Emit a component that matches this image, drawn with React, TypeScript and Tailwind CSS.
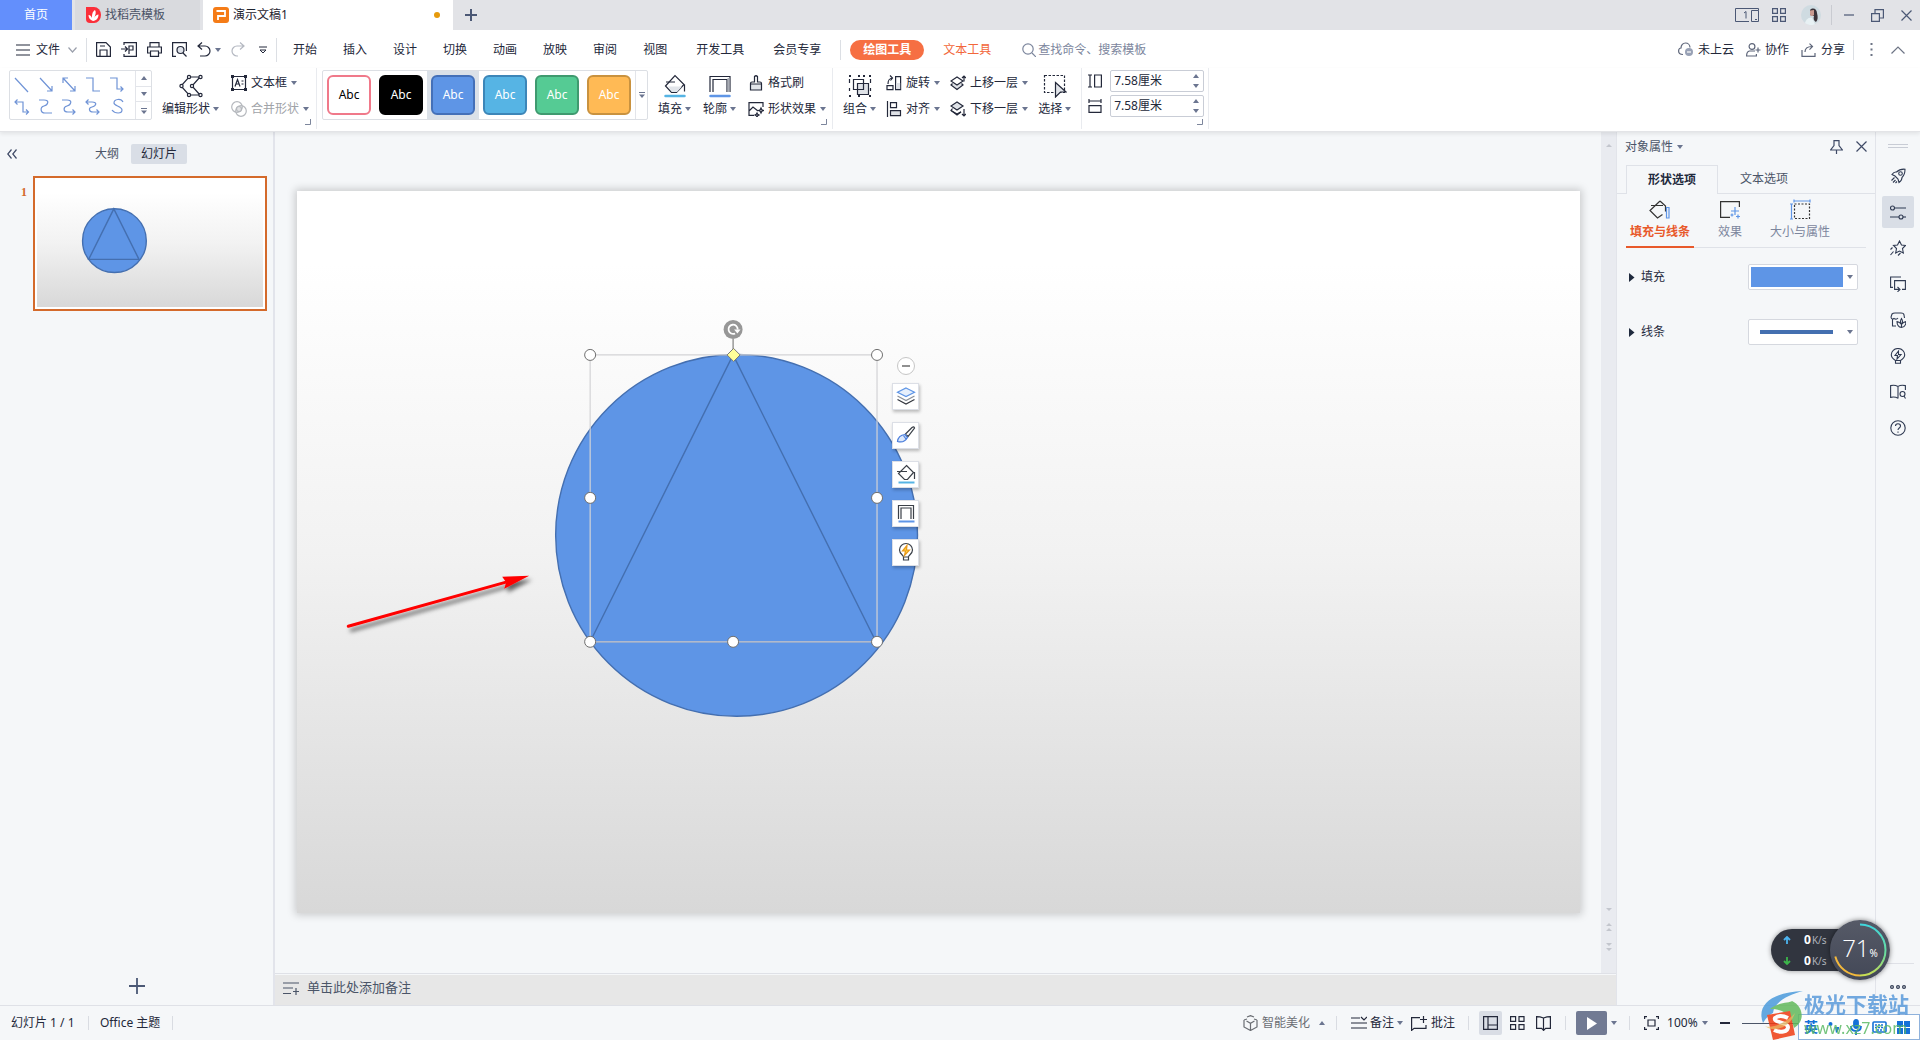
import React from "react";

const FONT = 'font-["Noto_Sans","Noto_Sans_CJK_SC",sans-serif]';

type IcoProps = { w?: number; h?: number; c?: string; sw?: number; children: React.ReactNode };

function Ico({ w = 16, h = 16, c = "currentColor", sw = 1.2, children }: IcoProps) {
  return (
    <svg width={w} height={h} viewBox={`0 0 ${w} ${h}`} fill="none" stroke={c} strokeWidth={sw} className="shrink-0" aria-hidden="true">
      {children}
    </svg>
  );
}

function Caret({ up = false }: { up?: boolean }) {
  return (
    <svg width="6" height="4" viewBox="0 0 6 4" className="shrink-0 fill-[#6b7590]" aria-hidden="true">
      <path d={up ? "M0 4h6L3 0z" : "M0 0h6L3 4z"} />
    </svg>
  );
}

function Launcher() {
  return (
    <button aria-label="更多设置" className="absolute right-[5px] bottom-1 text-[#7d869c]">
      <Ico w={6} h={6} sw={1}><path d="M5.500 0v5.500H0" /></Ico>
    </button>
  );
}

function BigTool({ icon, label }: { icon: React.ReactNode; label: string }) {
  return (
    <button className="flex flex-col items-center gap-0.5">
      <span className="flex h-6 items-center">{icon}</span>
      <span className="flex h-[18px] items-center gap-[3px] whitespace-nowrap">{label}<Caret /></span>
    </button>
  );
}

function RowTool({ icon, label, caret = true, disabled = false }: { icon: React.ReactNode; label: string; caret?: boolean; disabled?: boolean }) {
  return (
    <button disabled={disabled} className="flex h-[18px] items-center gap-1 whitespace-nowrap disabled:text-[#a0a3a8]">
      {icon}
      <span>{label}</span>
      {caret && <Caret />}
    </button>
  );
}

const lineIcons = [
  "M1 2l13 14", "M2 2l12 13M14 10v5h-5", "M2 2l12 13M2 7V2h5M14 10v5h-5", "M1 2h7v13h7", "M1 2h7v11h6M11.500 10.500l2.500 2.500-2.500 2.500",
  "M1 4h8v10h6M3.500 1.500L1 4l2.500 2.500M12 11.500l2.500 2.500-2.500 2.500", "M1 2h5c6 0 4 5 0 6s-4 7 1 7h7", "M1 2h5c6 0 4 5 0 6s-4 6 1 6h7M11.500 11.500l2.500 2.500-2.500 2.500", "M1 4h6c6 0 4 4 0 5s-3 5 1 5h6M3.500 1.500L1 4l2.500 2.500M11.500 11.500l2.500 2.500-2.500 2.500", "M14 4c-2-4-9-3-9 1 0 3 8 3 8 7 0 4-7 4-10 0",
];

const swatches = [
  "bg-white border-[#f0798a] text-black",
  "bg-black border-black text-white",
  "bg-[#5e95e6] border-[#4470b8] text-white",
  "bg-[#56b4e4] border-[#3c86b8] text-white",
  "bg-[#55cb94] border-[#3f9a6f] text-white",
  "bg-[#ffba55] border-[#c9923f] text-white",
];

function BucketShape() {
  return (
    <>
      <path d="M2.500 12L12 1.500l9 9-7.500 8h-5z" />
      <path d="M5 12.500h14l-5 5.500h-5z" fill="#e2e5ea" stroke="none" />
      <path d="M3 8h9M21.500 10.500v7" />
    </>
  );
}

function TitleBar() {
  return (
    <header className="flex h-[30px] shrink-0 items-stretch bg-[#e2e3e7] text-[#4b5875]">
      <button className="w-[72px] bg-[#638ffc] text-white">首页</button>
      <button className="ml-[3px] flex w-[125px] items-center gap-1 bg-[#d9dade] pl-[11px] text-[#4a5266]">
        <Ico w={15} h={16} c="none">
          <path d="M0 0h8a7 8 0 0 1 0 16H4a4 4 0 0 1-4-4z" fill="#fb2f3a" />
          <path d="M7 14C4 13 2.500 11 2.500 8c2 0 3 1.500 3.500 3 0-3 0-6 3-8 1.500 2 .5 5-1 8 1-2 3-3.500 4.500-3.500C12.500 11 10.500 13.500 7 14z" fill="#fff" />
        </Ico>
        找稻壳模板
      </button>
      <div className="ml-[3px] flex w-[250px] items-center gap-1 bg-white pl-[10px] pr-[13px] text-[#1f2430]">
        <Ico w={16} h={16} c="#fff" sw={1.8}>
          <rect width="16" height="16" rx="3" fill="#f57c17" stroke="none" />
          <path d="M3.500 4H12v5H5v4" />
        </Ico>
        <span className="grow">演示文稿1</span>
        <span className="size-1.5 rounded-full bg-[#e69a0c]" />
      </div>
      <button aria-label="新建" className="px-3"><Ico w={12} h={12} sw={2}><path d="M6 0v12M0 6h12" /></Ico></button>
      <div className="ml-auto flex items-center pr-2">
        <button aria-label="窗口"><Ico w={24} h={14} sw={1}>
          <path d="M14 13.500H.5V.5h23v2" /><path d="M16.500 2.500h7v11h-7zM20 11.500h2" /><path d="M9 5l2-1.500V10.500" />
        </Ico></button>
        <button aria-label="应用" className="ml-[13px]"><Ico w={14} h={14}>
          <path d="M.6.6h4.800v4.800H.6zM8.600.6h4.800v4.800H8.600zM.6 8.600h4.800v4.800H.6zM8.600 8.600h4.800v4.800H8.600z" />
        </Ico></button>
        <button aria-label="用户" className="ml-[15px]"><Ico w={20} h={20} c="none">
          <circle cx="10" cy="10" r="10" fill="#cfdbe1" />
          <path d="M4 18c1-4 4-6 7-5l3 6c-3 2-7 1-10-1z" fill="#e8f1f4" />
          <path d="M9 5c3-3 7-1 7 3 1 4 1 7-1 9-2-1-3-3-2-6l-4-1z" fill="#3a3238" />
          <path d="M9 5.500l4-.5v5c-2 2-4 1-4-1z" fill="#c99a90" />
        </Ico></button>
        <span className="ml-2.5 h-5 w-px bg-[#c9cbd1]" />
        <button aria-label="最小化" className="ml-3"><Ico w={10} h={12}><path d="M0 6h10" /></Ico></button>
        <button aria-label="还原" className="ml-[17px]"><Ico w={13} h={13}><path d="M.6 4.600h7.800v7.800H.6zM4 4.500V.6h8.400v8.400h-4" /></Ico></button>
        <button aria-label="关闭" className="ml-[17px]"><Ico w={11} h={11}><path d="M.5.5l10 10M10.500.5l-10 10" /></Ico></button>
      </div>
    </header>
  );
}

function MenuRow() {
  return (
    <nav className="flex h-[38px] shrink-0 items-center whitespace-nowrap pl-4 pt-px">
      <button className="flex items-center gap-[6px]">
        <Ico w={14} h={12}><path d="M0 1h14M0 6h14M0 11h14" /></Ico>
        文件
        <span className="pl-0.5 text-[#9a9fab]"><Ico w={9} h={6}><path d="M.5.5l4 4.500 4-4.500" /></Ico></span>
      </button>
      <span className="ml-[9px] h-6 w-px bg-[#dcdfe4]" />
      <div className="ml-[9px] flex items-center gap-2.5">
        <button aria-label="保存"><Ico w={15} h={15}><path d="M.6 14V.6h9.400l4.400 4.400v9.400H1zM4 14V8h7v6M4 4h5" /></Ico></button>
        <button aria-label="输出"><Ico w={16} h={15}><path d="M3 3V.6h12.400v13.800H3V12M0 7h6M4 4.500L6.500 7 4 9.500M8 12V4h4v4H8" /></Ico></button>
        <button aria-label="打印"><Ico w={15} h={15}><path d="M3 5V.6h9V5M3 11H.6V5h13.800v6H12M3.500 9h8v5.400h-8z" /></Ico></button>
        <button aria-label="打印预览"><Ico w={15} h={15}><path d="M4 14.400H.6V.6h13.800V9" /><circle cx="8.500" cy="8" r="3.500" fill="#dfe3ea" /><path d="M11 11l3.500 3.500" /></Ico></button>
        <button aria-label="撤销" className="flex items-center gap-1"><Ico w={14} h={15}><path d="M5 .5L1 4l4 3.500M1 4h7a5 5 0 0 1 0 10H3" /></Ico><Caret /></button>
        <button aria-label="恢复" className="text-[#b4b8c1]"><Ico w={14} h={15}><path d="M9 .5L13 4 9 7.500M13 4H6a5 5 0 0 0 0 10h1" /></Ico></button>
        <button aria-label="自定义" className="pl-1"><Ico w={8} h={8} sw={1}><path d="M0 1h8M1 4l3 3 3-3z" /></Ico></button>
      </div>
      <span className="ml-[9px] h-6 w-px bg-[#dcdfe4]" />
      <div className="ml-4 flex gap-[26px]">
        {["开始", "插入", "设计", "切换", "动画", "放映", "审阅", "视图"].map((t) => <button key={t}>{t}</button>)}
      </div>
      <button className="ml-[29px]">开发工具</button>
      <button className="ml-[29px]">会员专享</button>
      <span className="ml-[19px] h-5 w-px bg-[#dcdfe4]" />
      <button className="ml-[9px] h-5 w-[74px] rounded-full bg-[#f66f43] font-bold text-white">绘图工具</button>
      <button className="ml-[19px] text-[#f2673a]">文本工具</button>
      <label className="ml-[31px] flex items-center gap-0.5 text-[#7c869d]">
        <Ico w={14} h={14}><circle cx="6" cy="6" r="5.200" /><path d="M10 10l4 4" /></Ico>
        <input placeholder="查找命令、搜索模板" aria-label="查找命令" className="w-[120px] outline-none placeholder:text-[#7c869d]" />
      </label>
      <div className="ml-auto flex items-center pr-[15px]">
        <button className="flex items-center gap-1">
          <Ico w={16} h={15} c="#5d6579"><path d="M5 12.500C2 12.500.6 11 .6 9S2 6 3 6c0-3 2-5 4.500-5S12 3 12 5.500" /><circle cx="11" cy="10" r="4" fill="#98a1b5" stroke="none" /><path d="M9 10h4" stroke="#fff" /></Ico>
          未上云
        </button>
        <button className="ml-3 flex items-center gap-1">
          <Ico w={15} h={14} c="#5d6579"><circle cx="6" cy="3.500" r="2.900" /><path d="M9 8H3.500Q.6 8.500.6 13h9.800v-2M12 4.500v5M9.500 7h5" /></Ico>
          协作
        </button>
        <button className="ml-3 flex items-center gap-1">
          <Ico w={16} h={14} c="#5d6579"><path d="M1 7v6.400h13V10M4 9c0-4 3-5.500 7-5.500M8.500.6l3 3-3 3" /></Ico>
          分享
        </button>
        <span className="ml-2 h-5 w-px bg-[#dcdfe4]" />
        <button aria-label="更多" className="ml-4 text-[#6d7485]"><Ico w={3} h={13}><path d="M1.500 0v2M1.500 5.500v2M1.500 11v2" strokeWidth="2" /></Ico></button>
        <button aria-label="折叠功能区" className="ml-[18px] text-[#6d7485]"><Ico w={14} h={8}><path d="M.5 7.500L7 1l6.500 6.500" /></Ico></button>
      </div>
    </nav>
  );
}

function SizeField({ label, icon }: { label: string; icon: React.ReactNode }) {
  return (
    <label className="flex items-center gap-2">
      {icon}
      <span className="flex h-[22px] w-[94px] items-center rounded-xs border border-[#c9cdd6] pl-[3px] pr-1">
        <input aria-label={label} defaultValue="7.58厘米" className="min-w-0 grow outline-none" />
        <span className="flex flex-col gap-1.5">
          <button aria-label={label + "增加"}><Caret up /></button>
          <button aria-label={label + "减少"}><Caret /></button>
        </span>
      </span>
    </label>
  );
}

function Ribbon() {
  const layers = <path d="M1 9.500L7 13l4-2.300" />;
  return (
    <section className="relative z-10 flex h-16 shrink-0 border-b border-[#e3e4e7] pb-0.5 shadow-[0_2px_4px_rgba(0,0,0,0.08)]">
      <div className="relative flex border-r border-[#e9ebef] pl-[9px] pr-[7px]">
        <div className="mt-0.5 flex h-[50px] w-[143px] rounded-xs border border-[#dcdfe4]">
          <div className="grid grow grid-cols-5 items-center justify-items-center py-0.5 pr-1.5">
            {lineIcons.map((d, i) => <button key={i} aria-label={"线条" + (i + 1)}><Ico c="#6f93d6" w={16} h={17}><path d={d} /></Ico></button>)}
          </div>
          <div className="flex w-4 flex-col divide-y divide-[#e3e5ea] border-l border-[#e3e5ea]">
            <button aria-label="上一行" className="flex grow items-center justify-center"><Caret up /></button>
            <button aria-label="下一行" className="flex grow items-center justify-center"><Caret /></button>
            <button aria-label="展开" className="flex grow items-center justify-center text-[#6b7590]"><Ico w={6} h={6} sw={1}><path d="M0 .5h6" /><path d="M0 2.500h6L3 6z" fill="currentColor" stroke="none" /></Ico></button>
          </div>
        </div>
        <div className="ml-2.5 flex gap-3 pt-1.5">
          <BigTool label="编辑形状" icon={
            <Ico w={24} h={24}><path d="M10 3h11l-8 9 8 9H10l-8-9z" /><g fill="#fff"><circle cx="10" cy="3" r="1.600" /><circle cx="21.500" cy="3" r="1.600" /><circle cx="2.500" cy="12" r="1.600" /><circle cx="13" cy="12" r="1.600" /><circle cx="10" cy="21" r="1.600" /><circle cx="21.500" cy="21" r="1.600" /></g></Ico>} />
          <div className="flex flex-col gap-2">
            <RowTool label="文本框" icon={<Ico><path d="M3 1.500h10M3 14.500h10M1.500 3v10M14.500 3v10" /><path d="M0 0h3v3H0zM13 0h3v3h-3zM0 13h3v3H0zM13 13h3v3h-3z" fill="currentColor" stroke="none" /><path d="M4 11.500l2.500-7 2.500 7M5 9h3M10.500 6h2M10.500 9h2" /></Ico>} />
            <RowTool disabled label="合并形状" icon={<Ico c="#b5b8bd"><circle cx="6" cy="6" r="5.300" /><circle cx="10" cy="10" r="5.300" /><circle cx="8" cy="8" r="2.500" fill="#e3e4e6" /></Ico>} />
          </div>
        </div>
        <Launcher />
      </div>

      <div className="relative flex border-r border-[#e9ebef] pl-[5px] pr-1.5">
        <div className="mt-0.5 flex h-[50px] rounded-xs border border-[#dcdfe4]">
          <div className="flex">
            {swatches.map((s, i) => (
              <button key={i} className={"flex w-[52px] items-center justify-center " + (i === 2 ? "bg-[#dbe1e8]" : "")}>
                <span className={"flex h-10 w-11 items-center justify-center rounded-md border-2 text-xs " + s}>Abc</span>
              </button>
            ))}
          </div>
          <button aria-label="更多样式" className="flex w-3 items-center justify-center border-l border-[#e3e5ea] text-[#6b7590]"><Ico w={6} h={6} sw={1}><path d="M0 .5h6" /><path d="M0 2.500h6L3 6z" fill="currentColor" stroke="none" /></Ico></button>
        </div>
        <div className="ml-2.5 flex gap-3 pt-1.5">
          <BigTool label="填充" icon={<Ico w={24} h={24}><BucketShape /><path d="M2.500 22h19" stroke="#56b4e4" strokeWidth="2.500" strokeLinecap="round" /></Ico>} />
          <BigTool label="轮廓" icon={<Ico w={24} h={24}><path d="M2 18V2.500h20V18" /><path d="M5 18V5.500h14V18" /><path d="M20.500 4v14" stroke="#a9adb5" strokeWidth="2" /><path d="M2.500 22h19" stroke="#5e95e6" strokeWidth="2.500" strokeLinecap="round" /></Ico>} />
          <div className="flex flex-col gap-2">
            <RowTool caret={false} label="格式刷" icon={<Ico><path d="M2.500 9h11v6h-11z" fill="#e2e5ea" stroke="none" /><path d="M2.500 9h11M2.500 15V8.500q0-1.500 1.500-1.500h2.500V1.500q1.500-1.500 3 0V7H12q1.500 0 1.500 1.500V15z" /></Ico>} />
            <RowTool label="形状效果" icon={<Ico><path d="M6 14.400H1V1.600h14V6M1 10l4-4 5 4" /><path d="M13 7l.8 1.700 1.700.8-1.700.8-.8 1.700-.8-1.700-1.700-.8 1.700-.8zM9 12l.7 1.300 1.300.7-1.300.7L9 16l-.7-1.300L7 14l1.300-.7z" fill="#fff" /></Ico>} />
          </div>
        </div>
        <Launcher />
      </div>

      <div className="flex gap-2.5 border-r border-[#e9ebef] pl-2.5 pr-2.5 pt-1.5">
        <BigTool label="组合" icon={<Ico w={24} h={24}><path d="M9.500 9.500h11v11h-11z" fill="#dfe2e7" /><path d="M5.500 5.500h10v10h-10z" /><path d="M1 1h2.500v2.500H1M20 1h3v2.500M1 20.500V23h2.500M20.500 23H23v-2.500" stroke="none" /><path d="M2 1v2M22 1v2M2 21v2M22 21v2M11 1v2M11 21v2M16 1v2" strokeWidth="2" /><path d="M1.500 5v4M22.500 5v4M1.500 14v3M22.500 14v3" /></Ico>} />
        <div className="flex flex-col gap-2">
          <RowTool label="旋转" icon={<Ico><path d="M9.600 1.600h5v13h-5zM1 10.600h6v4H1z" /><path d="M10.200 8h4v6h-4z" fill="#dfe2e7" stroke="none" /><path d="M2 9c0-4 1-5.500 4.500-6M4 .5L6.500 3 4.500 5.500" /></Ico>} />
          <RowTool label="对齐" icon={<Ico><path d="M1.500 0v16" /><path d="M4.500 1.600h6v5h-6z" /><path d="M4.500 9.600h10v5h-10z" fill="#dfe2e7" /></Ico>} />
        </div>
        <div className="flex flex-col gap-2">
          <RowTool label="上移一层" icon={<Ico><path d="M2.500 8.500L1 10l6 4.500 6-4.500-1.500-1.500" fill="#dfe2e7" /><path d="M7 2L1 6l6 4 6-4z" fill="#fff" /><path d="M14 6.500V.8M12 3l2-2 2 2" /></Ico>} />
          <RowTool label="下移一层" icon={<Ico>{layers}<path d="M7 1L1 5l6 4 6-4z" fill="#dfe2e7" /><path d="M2.500 7.500L1 9.500l6 4.500 4-3M14 8v7M12 13l2 2 2-2" /></Ico>} />
        </div>
        <BigTool label="选择" icon={<Ico w={24} h={24}><path d="M1.500 1.500h20v17h-20z" strokeDasharray="2.500 1.500" /><path d="M12.500 8.500L23 18h-5.500L12.500 23z" fill="#e2e5ea" /></Ico>} />
      </div>

      <div className="relative flex flex-col gap-[3px] border-r border-[#e9ebef] pl-1.5 pr-1 pt-0.5">
        <SizeField label="高度" icon={<Ico w={14} h={14}><path d="M0 1h4M0 13h4M2 1v12M6.600 1h6.800v12H6.600z" /></Ico>} />
        <SizeField label="宽度" icon={<Ico w={14} h={14}><path d="M1 0v4M13 0v4M1 2h12M1 6.600h12v6.800H1z" /></Ico>} />
        <Launcher />
      </div>
    </section>
  );
}

function Shapes() {
  return (
    <g fill="#5e95e6" stroke="#446fb0" strokeWidth="1.400">
      <circle cx="439.500" cy="344.500" r="181" vectorEffect="non-scaling-stroke" />
      <path d="M436 164L293 451h286z" vectorEffect="non-scaling-stroke" />
    </g>
  );
}

const slideBg = "bg-linear-to-b from-white from-10% via-[#f2f2f2] via-50% to-[#d8d8d8]";

function LeftPanel() {
  return (
    <aside className="flex w-[275px] shrink-0 flex-col border-r-2 border-[#e2e4eb]">
      <div className="mt-3 flex h-5 items-center">
        <button aria-label="收起" className="ml-[7px]"><Ico w={10} h={10} c="#3f4a66"><path d="M4.500.5L.8 5l3.700 4.500M9.500.5L5.800 5l3.700 4.500" /></Ico></button>
        <button className="ml-[78px] text-[#4b5568]">大纲</button>
        <button className="ml-3 h-5 w-14 rounded-xs bg-[#d9dee6]">幻灯片</button>
      </div>
      <div className="mt-3 flex">
        <span className="w-[33px] pl-[21px] pt-2 font-['Liberation_Serif',serif] font-bold leading-4 text-[#d46a2b]">1</span>
        <button aria-label="幻灯片 1" className="w-[234px] border-2 border-[#d46a2b] bg-white p-0.5">
          <span className={"block aspect-video w-full " + slideBg}>
            <svg viewBox="0 0 1283 722" className="size-full" aria-hidden="true"><Shapes /></svg>
          </span>
        </button>
      </div>
      <button aria-label="新建幻灯片" className="mb-[11px] mt-auto self-center"><Ico w={16} h={16} sw={1.800} c="#4b5875"><path d="M8 0v16M0 8h16" /></Ico></button>
    </aside>
  );
}

const handles = [[293, 164], [580, 164], [293, 307], [580, 307], [293, 451], [436, 451], [580, 451]];

const floatIcons = [
  <Ico key="a" w={20} h={20}><path d="M1.500 13.500L10 18l8.500-4.500" stroke="#33373f" /><path d="M1.500 10L10 14.500 18.500 10" stroke="#8b9099" /><path d="M10 2l8.500 4.200L10 10.500 1.500 6.200z" fill="#e6effc" stroke="#5e95e6" /></Ico>,
  <Ico key="b" w={20} h={20}><path d="M9.500 9L16 2.500q2-1.500 2.500.5L12 11.500z" /><path d="M1.500 16.500C2 12 4 10 9 9.500l2.500 3C9 17 5 17.500 1.500 16.500zM7 10l3 4" fill="#dce8fb" stroke="#4a7ddb" /></Ico>,
  <Ico key="c" w={20} h={20}><path d="M10.500 1.500l7 7-6 7h-3l-6-6zM1 7.500h10M18.500 8v7" /><path d="M2.500 18.500h16" stroke="#56b4e4" strokeWidth="2" /></Ico>,
  <Ico key="d" w={20} h={20}><path d="M2.500 16V2.500h15V16M5 16V5h10v11" /><path d="M2.500 18.500h16" stroke="#5e95e6" strokeWidth="2" /></Ico>,
  <Ico key="e" w={20} h={20}><path d="M7.500 15c0-2-4-3-4-7a6.500 6.500 0 0 1 13 0c0 4-4 5-4 7zM7.500 15v3h5v-3" /><path d="M11 3.500L6.500 9h3l-1 4.500L13.500 8h-3z" fill="#ffd23c" stroke="#e99a1c" /></Ico>,
];
const floatNames = ["图层", "格式刷", "填充", "轮廓", "智能推荐"];

function Canvas() {
  return (
    <main className="flex min-w-0 grow flex-col">
      <div className="flex min-h-0 grow border-b border-[#dfe1e7]">
        <div className="min-w-0 grow pl-[22px] pr-[21px] pt-[59px]">
          <div className={"relative aspect-video w-full shadow-[0_0_8px_2px_rgba(0,0,0,0.18)] " + slideBg}>
            <svg viewBox="0 0 1283 722" className="size-full" role="img" aria-label="幻灯片画布">
              <defs>
                <filter id="arrowShadow" x="-10%" y="-20%" width="125%" height="150%">
                  <feDropShadow dx="3" dy="4" stdDeviation="2" floodOpacity="0.6" />
                </filter>
              </defs>
              <Shapes />
              <path d="M293 164h287v287H293z" fill="none" stroke="#d3d3d6" strokeWidth="1.200" />
              <path d="M436 148v16" stroke="#666" />
              <circle cx="436" cy="138.500" r="9.500" fill="#979797" />
              <path d="M438 142.500a4.600 4.600 0 1 1 2.600-4" fill="none" stroke="#fff" strokeWidth="1.800" />
              <path d="M437 138.500h6.500l-3.200 4z" fill="#fff" />
              {handles.map(([x, y], i) => <circle key={i} cx={x} cy={y} r="5.500" fill="#fff" stroke="#6e6e6e" />)}
              <path d="M436.500 157.500l6.500 6.500-6.500 6.500-6.500-6.500z" fill="#ffff99" stroke="#777" />
              <g filter="url(#arrowShadow)">
                <path d="M51 435.500L208 391.500" stroke="#f00" strokeWidth="3" strokeLinecap="round" />
                <path d="M232 385l-27 1 4 5.500-2 6.500z" fill="#f00" />
              </g>
            </svg>
            <div className="absolute left-[46.4%] top-[23%] flex flex-col items-center gap-3 text-[#3b4048]">
              <button aria-label="收起工具" className="-mb-1 flex size-[18px] items-center justify-center rounded-full border border-[#c6c6c6] bg-white"><span className="h-0.5 w-2 bg-[#909090]" /></button>
              {floatIcons.map((ic, i) => (
                <button key={i} aria-label={floatNames[i]} className="flex size-[27px] items-center justify-center border border-[#dcdfe6] bg-white shadow-[1px_2px_3px_rgba(0,0,0,0.25)]">{ic}</button>
              ))}
            </div>
          </div>
        </div>
        <div className="flex w-[15px] shrink-0 flex-col items-center bg-[#e9ebf0] pb-[22px] pt-3 text-[#c3c6cd]">
          <Ico w={6} h={3}><path d="M0 3h6L3 0z" fill="currentColor" stroke="none" /></Ico>
          <span className="grow" />
          <div className="flex flex-col gap-3">
            <Ico w={6} h={3}><path d="M0 0h6L3 3z" fill="currentColor" stroke="none" /></Ico>
            <Ico w={6} h={8}><path d="M0 3h6L3 0zM0 8h6L3 5z" fill="currentColor" stroke="none" /></Ico>
            <Ico w={6} h={8}><path d="M0 0h6L3 3zM0 5h6L3 8z" fill="currentColor" stroke="none" /></Ico>
          </div>
        </div>
      </div>
      <div className="mt-px flex h-[30px] shrink-0 items-center gap-2 bg-[#e7e7e7] pb-1 pl-2 text-[#4b5568]">
        <Ico w={16} h={13}><path d="M0 1h16M0 6h10M0 11.500h8M13 6v7M10 9.500h6" /></Ico>
        <input aria-label="备注" placeholder="单击此处添加备注" className="grow text-[13px] outline-none placeholder:text-[#4b5568]" />
      </div>
    </main>
  );
}

function RightPanel() {
  const subtab = "flex flex-col items-center gap-1";
  return (
    <aside className="flex w-[260px] shrink-0 flex-col border-x border-[#e2e4ea] text-[#4b5568]">
      <div className="flex h-[33px] shrink-0 items-center pl-2 pr-2 pb-1">
        <button className="flex items-center gap-1">对象属性<Caret /></button>
        <button aria-label="固定" className="ml-auto"><Ico w={13} h={14} c="#3f4a66"><path d="M4 .6h5v5l3.400 4.400H.6L4 5.600zM6.500 10v4" /></Ico></button>
        <button aria-label="关闭" className="ml-[13px]"><Ico w={11} h={11} c="#3f4a66"><path d="M.5.5l10 10M10.500.5l-10 10" /></Ico></button>
      </div>
      <div className="flex h-[29px] shrink-0 items-stretch" role="tablist">
        <span className="w-[9px] border-b border-[#dfe2e8]" />
        <button role="tab" aria-selected="true" className="w-[92px] border border-b-0 border-[#dfe2e8] font-bold text-[#1f2a3d]">形状选项</button>
        <button role="tab" aria-selected="false" className="grow border-b border-[#dfe2e8] pl-[22px] text-left">文本选项</button>
      </div>
      <div className="ml-[9px] mr-[9px] flex h-[54px] items-stretch gap-6 border-b border-[#dfe2e8] pt-1">
        <button className={subtab + " -mb-px w-[68px] border-b-2 border-[#e8592b] font-bold text-[#e8592b]"}>
          <Ico w={24} h={22} c="#333"><path d="M12 3L2 12.500 9.500 20l5-3.500M3 7.500h12M12 3l5.500 5v5.500" /><path d="M18.500 9.500h2.500v10.500h-2.500z" stroke="#5e95e6" /></Ico>填充与线条
        </button>
        <button className={subtab + " text-[#7c869d]"}>
          <Ico w={22} h={22} c="#333"><path d="M11 19.400H1.600V3.600h18.800V9" /><path d="M16 9v8M12 13h8M19 16.500v4M17 18.500h4M13 15.500v3M11.500 17h3" stroke="#5e95e6" /></Ico>效果
        </button>
        <button className={subtab + " ml-1 text-[#7c869d]"}>
          <Ico w={22} h={22} c="#333"><path d="M5.500 6h15v14.500h-15z" strokeDasharray="2 1.500" /><path d="M5 3h16M5 1.500v3M21 1.500v3M2.500 6v15M1 6h3M1 21h3" stroke="#5e95e6" /></Ico>大小与属性
        </button>
      </div>
      <div className="ml-3 mr-[17px] mt-4 flex flex-col gap-[29px] text-[#1f2a3d]">
        <div className="flex items-center justify-between">
          <button className="flex items-center gap-1.5"><Ico w={6} h={9} c="none"><path d="M0 0l5.500 4.500L0 9z" fill="#1f2a3d" /></Ico>填充</button>
          <button aria-label="填充颜色" className="flex h-[26px] w-[110px] items-center gap-1 rounded-xs border border-[#d5d8df] bg-white pl-0.5"><span className="h-5 w-[92px] bg-[#5e95e6]" /><Caret /></button>
        </div>
        <div className="flex items-center justify-between">
          <button className="flex items-center gap-1.5"><Ico w={6} h={9} c="none"><path d="M0 0l5.500 4.500L0 9z" fill="#1f2a3d" /></Ico>线条</button>
          <button aria-label="线条样式" className="flex h-[26px] w-[110px] items-center justify-between rounded-xs border border-[#d5d8df] bg-white pl-[11px] pr-1"><span className="h-1 w-[73px] bg-[#446fb0]" /><Caret /></button>
        </div>
      </div>
    </aside>
  );
}

const railItems: [string, React.ReactNode][] = [
  ["快捷", <><path d="M2 6.500C4 3.500 5 4 6.500 4 9 1.500 12 1 15 1.200 15 5 14 7.500 12 9.500c0 2 0 3-3 5L8 11 5 8z" /><circle cx="10.500" cy="5.500" r="1.800" /><path d="M4.500 9.500L1.500 12.500M5.500 12L3 14.500M7 13.500L5.500 15" /></>],
  ["属性", <><circle cx="2.500" cy="4" r="2" /><path d="M4.500 4H16M0 13h9" /><circle cx="11" cy="13" r="2" /><path d="M13 13h3" /></>],
  ["动画", <><path d="M9.500 1l2 4 4 .5-3 3 .8 4.500-3.800-2-3.800 2 .8-4.500-3-3L7.500 5z" /><path d="M2.500 7.500L.5 9.500M3.500 11.500L.5 15M10.500 13L8 15.500" /></>],
  ["切换", <><path d="M11 1H.6v10.400H3" /><path d="M6 13.400H4.600V4.600h10.800v8.800H12M6 13.400h3M7.500 11L10 13.400 7.500 15.800" /></>],
  ["素材", <><path d="M2.500 7.500V14H6M1 5l1-3q1-1 3-1h6q3 0 3 2l.5 3M1 5q.5 3 3 1.500Q6.500 8 8 6" /><path d="M7 9.500q0 5.500 4.500 5.900Q16 15 16 9.500q-2 0-4.500 3Q9 9.500 7 9.500zM11.500 6.500q-2 3 0 6 2-3 0-6zM11.500 12v3" /></>],
  ["智能推荐", <><path d="M5.500 12.500C3 11 1.300 9.500 1.300 6.800a6.700 6.300 0 0 1 13.400 0c0 2.700-1.700 4.200-4.200 5.700zM5.500 12.500v2.800h5v-2.800" /><path d="M8.500 3L5 7.500h2.500L7 11l4-4.500H8.500z" /></>],
  ["查找", <><path d="M8 14.400q-3-2-7.400-1V1.600q4-1 7.400.8 3-1.800 7.400-.8V6M8 2.400v12" /><circle cx="12.500" cy="10" r="2.500" /><path d="M14 12l1.500 2.500" /></>],
  ["帮助", <><circle cx="8" cy="8" r="7.200" /><path d="M5.500 6c0-3 5-3 5 0 0 2-2.500 2-2.500 4M8 11.500v1.200" /></>],
];

function Rail() {
  return (
    <nav className="flex w-11 shrink-0 flex-col items-center gap-1 pt-3 text-[#2f3a52]">
      <span className="mb-2 h-1 w-5 border-y border-[#c8ccd5]" />
      {railItems.map(([name, icon]) => (
        <button key={name} aria-label={name} className={"flex size-8 items-center justify-center " + (name === "属性" ? "rounded-xs bg-[#d9dee6]" : "")}>
          <Ico sw={1.1}>{icon}</Ico>
        </button>
      ))}
      <span className="mt-auto h-px w-8 bg-[#dfe1e7]" />
      <button aria-label="更多" className="mb-4 mt-[17px]"><Ico w={16} h={4}><circle cx="2" cy="2" r="1.400" /><circle cx="8" cy="2" r="1.400" /><circle cx="14" cy="2" r="1.400" /></Ico></button>
    </nav>
  );
}

function StatusBar() {
  const sep = "h-3.5 w-px bg-[#d9dce2]";
  return (
    <footer className="flex h-[35px] shrink-0 items-center whitespace-nowrap border-t border-[#dfe1e7] pl-[11px]">
      <span className="w-[77px]">幻灯片 1 / 1</span>
      <span className={sep} />
      <span className="ml-[11px]">Office 主题</span>
      <span className={"ml-3 " + sep} />
      <div className="ml-auto flex w-[677px] items-center">
        <button className="flex items-center gap-1 text-[#6a6d73]">
          <Ico w={15} h={16}><path d="M4 2L7.500.6 11 2M1 5v7l6.500 3.500L14 12V5M1 5l3-1M14 5l-3-1M3.500 6l4 2.300L11.500 6M7.500 8.500V15" /></Ico>智能美化
          <span className="ml-[5px]"><Caret up /></span>
        </button>
        <span className={"ml-[11px] " + sep} />
        <button className="ml-3.5 flex items-center gap-[3px]"><Ico w={16} h={14}><path d="M0 2h9M0 7h16M0 12h16M10 1l3 3 3-3" /></Ico><span>备注</span><Caret /></button>
        <button className="ml-2 flex items-center gap-1"><Ico w={16} h={15}><path d="M9 1.600H.6v12.800l2.500-2H15V9M12.500 0v7M9 3.500h7" /></Ico>批注</button>
        <span className={"ml-[13px] " + sep} />
        <button aria-label="普通视图" className="ml-2.5 flex h-6 w-[23px] items-center justify-center rounded-xs bg-[#d9dde5]"><Ico w={15} h={14}><path d="M.6.6h13.800v12.800H.6zM5 .6v12.800M5 9h9.400" /></Ico></button>
        <button aria-label="幻灯片浏览" className="ml-2"><Ico w={15} h={14}><path d="M.6.6h5v4.800h-5zM9 .6h5v4.800H9zM.6 8.600h5v4.800h-5zM9 8.600h5v4.800H9z" /></Ico></button>
        <button aria-label="阅读视图" className="ml-[11px]"><Ico w={15} h={15}><path d="M7.500 2Q4 .6.600.6v11.800h5l2 2 2-2h4.800V.6Q11 .6 7.500 2v12" /></Ico></button>
        <span className={"ml-3.5 " + sep} />
        <button aria-label="放映" className="ml-2.5 flex h-6 w-[31px] items-center justify-center rounded-xs bg-[#717a93]"><Ico w={10} h={13} c="none"><path d="M0 0l10 6.500L0 13z" fill="#fff" /></Ico></button>
        <button aria-label="放映选项" className="ml-1"><Caret /></button>
        <span className={"ml-3 " + sep} />
        <button aria-label="适应窗口" className="ml-3.5"><Ico w={15} h={14}><path d="M.6 3V.6H3M12 .6h2.400V3M.6 11v2.400H3M12 13.400h2.400V11M4 4h7v6H4z" /></Ico></button>
        <button className="ml-2 flex items-center gap-1">100%<Caret /></button>
        <button aria-label="缩小" className="ml-3"><Ico w={10} h={10} sw={2}><path d="M0 5h10" /></Ico></button>
        <input type="range" aria-label="缩放" className="ml-3 h-px w-[120px] appearance-none bg-[#4b5568] [&::-webkit-slider-thumb]:opacity-0" />
      </div>
    </footer>
  );
}

function NetMeter() {
  return (
    <div className="absolute bottom-[60px] right-[30px] z-20 flex items-center text-white">
      <div className="-mr-[32px] flex h-[42px] w-[91px] flex-col justify-center rounded-l-full bg-[#31353f] pl-3 shadow-[0_0_5px_rgba(0,0,0,0.4)]">
        {[["#4cb4f0", "M4 8V1M1 4l3-3 3 3"], ["#3cb54a", "M4 0v7M1 4l3 3 3-3"]].map(([color, d]) => (
          <div key={color} className="flex h-[21px] items-center">
            <Ico w={8} h={8} c={color} sw={1.800}><path d={d} /></Ico>
            <span className="ml-[13px] text-xs font-bold leading-4">0</span>
            <span className="ml-px text-[10px] leading-4 text-[#aeb2bb]">K/s</span>
          </div>
        ))}
      </div>
      <div className="relative flex size-[60px] items-center justify-center rounded-full bg-linear-to-b from-[#565a67] to-[#434857] pb-1 shadow-[0_0_5px_rgba(0,0,0,0.5)]">
        <svg viewBox="0 0 60 60" className="absolute inset-0 size-full" fill="none" strokeWidth="2" aria-hidden="true">
          <defs>
            <linearGradient id="gauge" x1="0" y1="0" x2="0" y2="1"><stop offset="0" stopColor="#3fd6dc" /><stop offset="0.6" stopColor="#6fdc9a" /><stop offset="1" stopColor="#c9dd52" /></linearGradient>
          </defs>
          <path d="M30 4.500a25.500 25.500 0 0 1 0 51" stroke="url(#gauge)" />
          <path d="M30 55.500A25.500 25.500 0 0 1 5.300 36.500" stroke="#f2b83c" />
        </svg>
        <span className="relative font-['Open_Sans',sans-serif] text-2xl font-light leading-6">71</span>
        <span className="relative pt-2.5 text-[10px] leading-3">%</span>
      </div>
    </div>
  );
}

function InputBar() {
  return (
    <div className="absolute bottom-0 right-0 z-20">
      <div className="absolute bottom-0 right-0 flex h-[26px] w-[122px] items-center gap-2.5 border border-[#8fb2dc] bg-white pl-[5px] text-[#1571d8]">
        <span className="text-sm font-bold leading-5">英</span>
        <Ico w={12} h={12} c="none"><circle cx="2.500" cy="3" r="2" fill="#1571d8" /><path d="M7 6h4q0 4-3 6" fill="#1571d8" /></Ico>
        <Ico w={12} h={16} sw={1.800}><rect x="4" y="1" width="4" height="8" rx="2" fill="currentColor" /><path d="M1 7q0 5 5 5t5-5M6 12v4" /></Ico>
        <Ico w={15} h={12} sw={1.600}><rect x="1" y="1" width="13" height="10" rx="1" /><path d="M3 4h9M3 6.500h9M5 9h5" strokeDasharray="2 1" /></Ico>
        <Ico w={13} h={13} c="none"><path d="M0 0h6v6H0zM7 0h6v6H7zM0 7h6v6H0zM7 7h6v6H7z" fill="#1571d8" /></Ico>
      </div>
      <div className="relative flex items-end opacity-85">
        <svg width="44" height="50" viewBox="0 0 44 50" fill="none" aria-hidden="true">
          <path d="M3 33C-4 15 12 2 43 1 28 5 14 12 13 23c-4 2-7 5-10 10z" fill="#4b9bdc" />
          <path d="M10 19c8-7 20-6 22-8 11 5 14 20 2 27-3-12-9-19-24-19z" fill="#62b95c" />
          <path d="M7 25l23-4 5 24-22 5z" fill="#f03c12" />
          <path d="M28 28q-8-4-13 0c-2 5 13 4 13 9 0 5-8 6-14 3" stroke="#fff" strokeWidth="4" />
          <path d="M5 36c6 3 20-2 30-13-4 13-20 21-30 13z" fill="#e8b24a" opacity=".7" />
        </svg>
        <div className="flex w-[116px] flex-col">
          <span className="whitespace-nowrap text-[21px] font-bold leading-6 text-[#5b9bdb]">极光下载站</span>
          <span className="text-base leading-6 text-[#5cba66]">www.xz7.com</span>
        </div>
      </div>
    </div>
  );
}

export default function App() {
  return (
    <div className={"relative flex h-screen flex-col overflow-hidden bg-white text-xs text-[#23283a] " + FONT}>
      <TitleBar />
      <MenuRow />
      <Ribbon />
      <div className="flex min-h-0 grow bg-[#f5f7f9]">
        <LeftPanel />
        <Canvas />
        <RightPanel />
        <Rail />
      </div>
      <div className="bg-[#f5f7f9]"><StatusBar /></div>
      <NetMeter />
      <InputBar />
    </div>
  );
}
